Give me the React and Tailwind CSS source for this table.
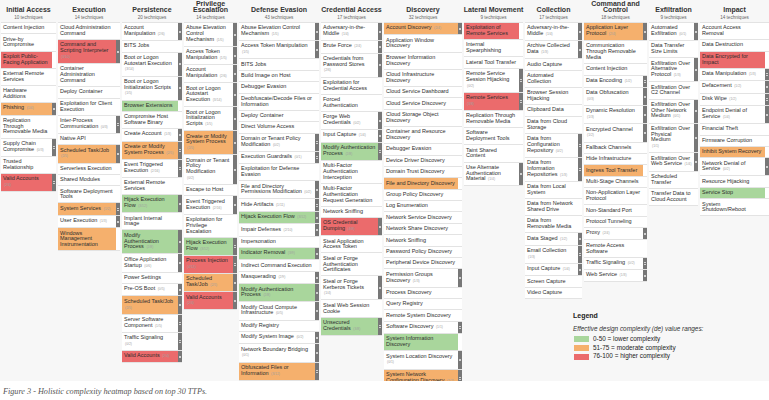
import React from "react";

const colours = {
  g: "bg-[#a9d69c]",
  o: "bg-[#f5b06d]",
  r: "bg-[#eb6b6c]",
};

// [technique, colour, sub-technique count, count on its own line]
const tactics = [
  {
    title: ["Initial Access"],
    count: 10,
    cells: [
      ["Content Injection"],
      ["Drive-by Compromise"],
      ["Exploit Public-Facing Application", "r"],
      ["External Remote Services"],
      ["Hardware Additions"],
      ["Phishing", "o", "1/4"],
      ["Replication Through Removable Media"],
      ["Supply Chain Compromise", "", "0/3"],
      ["Trusted Relationship"],
      ["Valid Accounts", "r", "2/4", 1],
    ],
  },
  {
    title: ["Execution"],
    count: 14,
    cells: [
      ["Cloud Administration Command"],
      ["Command and Scripting Interpreter", "r", "3/10", 1],
      ["Container Administration Command"],
      ["Deploy Container"],
      ["Exploitation for Client Execution"],
      ["Inter-Process Communication", "", "0/3"],
      ["Native API"],
      ["Scheduled Task/Job", "o", "2/5", 1],
      ["Serverless Execution"],
      ["Shared Modules"],
      ["Software Deployment Tools"],
      ["System Services", "o", "1/2"],
      ["User Execution", "", "1/3"],
      ["Windows Management Instrumentation", "o"],
    ],
  },
  {
    title: ["Persistence"],
    count: 20,
    cells: [
      ["Account Manipulation", "", "2/6"],
      ["BITS Jobs"],
      ["Boot or Logon Autostart Execution", "", "3/14", 1],
      ["Boot or Logon Initialization Scripts", "", "1/5", 1],
      ["Browser Extensions", "g"],
      ["Compromise Host Software Binary"],
      ["Create Account", "", "1/3"],
      ["Create or Modify System Process", "o", "2/5"],
      ["Event Triggered Execution", "", "2/16"],
      ["External Remote Services"],
      ["Hijack Execution Flow", "g", "3/12"],
      ["Implant Internal Image"],
      ["Modify Authentication Process", "g", "2/8"],
      ["Office Application Startup", "", "0/6"],
      ["Power Settings"],
      ["Pre-OS Boot", "", "0/5"],
      ["Scheduled Task/Job", "o", "2/5", 1],
      ["Server Software Component", "", "1/5"],
      ["Traffic Signaling", "", "0/2", 1],
      ["Valid Accounts", "r", "2/4"],
    ],
  },
  {
    title: ["Privilege", "Escalation"],
    count: 14,
    cells: [
      ["Abuse Elevation Control Mechanism", "", "1/5"],
      ["Access Token Manipulation", "", "1/5"],
      ["Account Manipulation", "", "2/6"],
      ["Boot or Logon Autostart Execution", "", "3/14"],
      ["Boot or Logon Initialization Scripts", "", "1/5"],
      ["Create or Modify System Process", "o", "2/5", 1],
      ["Domain or Tenant Policy Modification", "", "0/2", 1],
      ["Escape to Host"],
      ["Event Triggered Execution", "", "2/16"],
      ["Exploitation for Privilege Escalation"],
      ["Hijack Execution Flow", "g", "3/12"],
      ["Process Injection", "r", "4/12", 1],
      ["Scheduled Task/Job", "o", "2/5"],
      ["Valid Accounts", "r", "2/4", 1],
    ],
  },
  {
    title: ["Defense Evasion"],
    count: 43,
    cells: [
      ["Abuse Elevation Control Mechanism", "", "1/5"],
      ["Access Token Manipulation", "", "1/5", 1],
      ["BITS Jobs"],
      ["Build Image on Host"],
      ["Debugger Evasion"],
      ["Deobfuscate/Decode Files or Information"],
      ["Deploy Container"],
      ["Direct Volume Access"],
      ["Domain or Tenant Policy Modification", "", "0/2"],
      ["Execution Guardrails", "", "0/1"],
      ["Exploitation for Defense Evasion"],
      ["File and Directory Permissions Modification", "", "0/2"],
      ["Hide Artifacts", "", "1/11"],
      ["Hijack Execution Flow", "g", "3/12"],
      ["Impair Defenses", "", "2/10"],
      ["Impersonation"],
      ["Indicator Removal", "g", "3/9"],
      ["Indirect Command Execution"],
      ["Masquerading", "", "2/9"],
      ["Modify Authentication Process", "g", "2/8"],
      ["Modify Cloud Compute Infrastructure", "", "0/5"],
      ["Modify Registry"],
      ["Modify System Image", "", "0/2"],
      ["Network Boundary Bridging", "", "0/1", 1],
      ["Obfuscated Files or Information", "o", "3/12"],
      ["Plist File Modification"],
      ["Pre-OS Boot", "", "0/5"],
    ],
  },
  {
    title: ["Credential Access"],
    count: 17,
    cells: [
      ["Adversary-in-the-Middle", "", "1/4"],
      ["Brute Force", "", "2/4"],
      ["Credentials from Password Stores", "", "2/6", 1],
      ["Exploitation for Credential Access"],
      ["Forced Authentication"],
      ["Forge Web Credentials", "", "0/2"],
      ["Input Capture", "", "1/4"],
      ["Modify Authentication Process", "g", "2/8"],
      ["Multi-Factor Authentication Interception"],
      ["Multi-Factor Authentication Request Generation"],
      ["Network Sniffing"],
      ["OS Credential Dumping", "r", "4/8"],
      ["Steal Application Access Token"],
      ["Steal or Forge Authentication Certificates"],
      ["Steal or Forge Kerberos Tickets", "", "1/4", 1],
      ["Steal Web Session Cookie"],
      ["Unsecured Credentials", "g", "3/8"],
    ],
  },
  {
    title: ["Discovery"],
    count: 32,
    cells: [
      ["Account Discovery", "o", "2/4"],
      ["Application Window Discovery"],
      ["Browser Information Discovery"],
      ["Cloud Infrastructure Discovery"],
      ["Cloud Service Dashboard"],
      ["Cloud Service Discovery"],
      ["Cloud Storage Object Discovery"],
      ["Container and Resource Discovery"],
      ["Debugger Evasion"],
      ["Device Driver Discovery"],
      ["Domain Trust Discovery"],
      ["File and Directory Discovery", "o"],
      ["Group Policy Discovery"],
      ["Log Enumeration"],
      ["Network Service Discovery"],
      ["Network Share Discovery"],
      ["Network Sniffing"],
      ["Password Policy Discovery"],
      ["Peripheral Device Discovery"],
      ["Permission Groups Discovery", "", "1/3"],
      ["Process Discovery"],
      ["Query Registry"],
      ["Remote System Discovery"],
      ["Software Discovery", "", "1/1"],
      ["System Information Discovery", "g"],
      ["System Location Discovery", "", "0/1", 1],
      ["System Network Configuration Discovery", "o", "1/2"],
      ["System Network Connections Discovery"],
    ],
  },
  {
    title: ["Lateral Movement"],
    count: 9,
    cells: [
      ["Exploitation of Remote Services", "r"],
      ["Internal Spearphishing"],
      ["Lateral Tool Transfer"],
      ["Remote Service Session Hijacking", "", "0/2", 1],
      ["Remote Services", "r", "3/8", 1],
      ["Replication Through Removable Media"],
      ["Software Deployment Tools"],
      ["Taint Shared Content"],
      ["Use Alternate Authentication Material", "", "1/4"],
    ],
  },
  {
    title: ["Collection"],
    count: 17,
    cells: [
      ["Adversary-in-the-Middle", "", "1/4"],
      ["Archive Collected Data", "", "1/3"],
      ["Audio Capture"],
      ["Automated Collection"],
      ["Browser Session Hijacking"],
      ["Clipboard Data"],
      ["Data from Cloud Storage"],
      ["Data from Configuration Repository", "", "0/2"],
      ["Data from Information Repositories", "", "1/3"],
      ["Data from Local System"],
      ["Data from Network Shared Drive"],
      ["Data from Removable Media"],
      ["Data Staged", "", "1/2"],
      ["Email Collection", "", "1/3", 1],
      ["Input Capture", "", "1/4"],
      ["Screen Capture"],
      ["Video Capture"],
    ],
  },
  {
    title: ["Command and", "Control"],
    count: 18,
    cells: [
      ["Application Layer Protocol", "o", "2/4"],
      ["Communication Through Removable Media"],
      ["Content Injection"],
      ["Data Encoding", "", "1/2"],
      ["Data Obfuscation", "", "0/3", 1],
      ["Dynamic Resolution", "", "1/3", 1],
      ["Encrypted Channel", "", "1/2", 1],
      ["Fallback Channels"],
      ["Hide Infrastructure"],
      ["Ingress Tool Transfer", "o"],
      ["Multi-Stage Channels"],
      ["Non-Application Layer Protocol"],
      ["Non-Standard Port"],
      ["Protocol Tunneling"],
      ["Proxy", "", "2/4"],
      ["Remote Access Software"],
      ["Traffic Signaling", "", "0/2"],
      ["Web Service", "", "1/3"],
    ],
  },
  {
    title: ["Exfiltration"],
    count: 9,
    cells: [
      ["Automated Exfiltration", "", "0/1"],
      ["Data Transfer Size Limits"],
      ["Exfiltration Over Alternative Protocol", "", "1/3"],
      ["Exfiltration Over C2 Channel"],
      ["Exfiltration Over Other Network Medium", "", "0/1"],
      ["Exfiltration Over Physical Medium", "", "1/1", 1],
      ["Exfiltration Over Web Service", "", "1/4"],
      ["Scheduled Transfer"],
      ["Transfer Data to Cloud Account"],
    ],
  },
  {
    title: ["Impact"],
    count: 14,
    cells: [
      ["Account Access Removal"],
      ["Data Destruction"],
      ["Data Encrypted for Impact", "r"],
      ["Data Manipulation", "", "1/3"],
      ["Defacement", "", "1/2"],
      ["Disk Wipe", "", "1/2"],
      ["Endpoint Denial of Service", "", "1/4"],
      ["Financial Theft"],
      ["Firmware Corruption"],
      ["Inhibit System Recovery", "o"],
      ["Network Denial of Service", "", "0/2"],
      ["Resource Hijacking"],
      ["Service Stop", "g"],
      ["System Shutdown/Reboot"],
    ],
  },
];

function Cell({ item }) {
  const [name, colour, sub, ownLine] = item;
  return (
    <div className="flex border-b border-[#e3e3e3] bg-white">
      <div
        className={`flex-1 pl-[2px] pr-[1.5px] py-[2.3px] text-[5.5px] leading-[5.8px] text-[#2e2e2e] ${
          colour ? colours[colour] : ""
        }`}
      >
        {name}
        {sub && (ownLine ? <br /> : " ")}
        {sub && <span className="ml-[1px] text-[3.4px] text-[#a0a0a0]">({sub})</span>}
      </div>
      <div
        className={`flex w-[4.5px] shrink-0 flex-col items-center justify-center gap-[0.8px] ${
          sub ? "bg-[#777777]" : ""
        }`}
      >
        {sub && (
          <>
            <div className="h-[0.6px] w-[2px] bg-[#d0d0d0]" />
            <div className="h-[0.6px] w-[2px] bg-[#d0d0d0]" />
          </>
        )}
      </div>
    </div>
  );
}

export default function App() {
  return (
    <div className="w-[769px] h-[400px] overflow-hidden bg-white font-['Liberation_Sans',Arial,sans-serif]">
      {/* Heatmap panel */}
      <div className="relative h-[381px] overflow-hidden bg-[#f7f7f7]">
        <div className="grid grid-cols-[55px_62px_60px_53px_80px_61px_78px_59px_57px_63px_49px_69px] gap-x-[2px] pl-[1px]">
          {tactics.map((tactic) => (
            <div key={tactic.title.join(" ")} className="flex flex-col">
              {/* Heading */}
              <div className="flex h-[22px] flex-col items-center justify-end pb-[2px]">
                {tactic.title.map((line) => (
                  <div
                    key={line}
                    className="whitespace-nowrap text-[7px] font-bold leading-[6.4px] text-[#333]"
                  >
                    {line}
                  </div>
                ))}
                <div className="mt-[1.5px] text-[4.6px] leading-[5px] text-[#666]">
                  {tactic.count} techniques
                </div>
              </div>
              {/* Techniques */}
              <div className="flex flex-col border-t border-[#e3e3e3]">
                {tactic.cells.map((item) => (
                  <Cell key={item[0]} item={item} />
                ))}
              </div>
            </div>
          ))}
        </div>

        {/* Legend */}
        <div className="absolute left-[573px] top-[312px] text-[#222]">
          <div className="text-[7px] font-bold leading-[8px]">Legend</div>
          <div className="mt-[5px] text-[6.4px] italic leading-[7px] text-[#333]">
            Effective design complexity (de) value ranges:
          </div>
          <div className="mt-[4px] flex flex-col gap-[1.9px] pl-[1px]">
            {[
              ["bg-[#a9d69c]", "0-50 = lower complexity"],
              ["bg-[#f5b06d]", "51-75 = moderate complexity"],
              ["bg-[#eb6b6c]", "76-100 = higher complexity"],
            ].map(([bg, label]) => (
              <div key={label} className="flex items-center gap-[4px]">
                <div className={`h-[6px] w-[15px] ${bg}`} />
                <span className="text-[6.4px] leading-[6.8px]">{label}</span>
              </div>
            ))}
          </div>
        </div>
      </div>

      {/* Caption */}
      <p className="pl-[3px] pt-[6px] font-['Liberation_Serif',serif] text-[8.2px] italic leading-[9px] text-[#555]">
        Figure 3 - Holistic complexity heatmap based on top 30 TTPs.
      </p>
    </div>
  );
}
